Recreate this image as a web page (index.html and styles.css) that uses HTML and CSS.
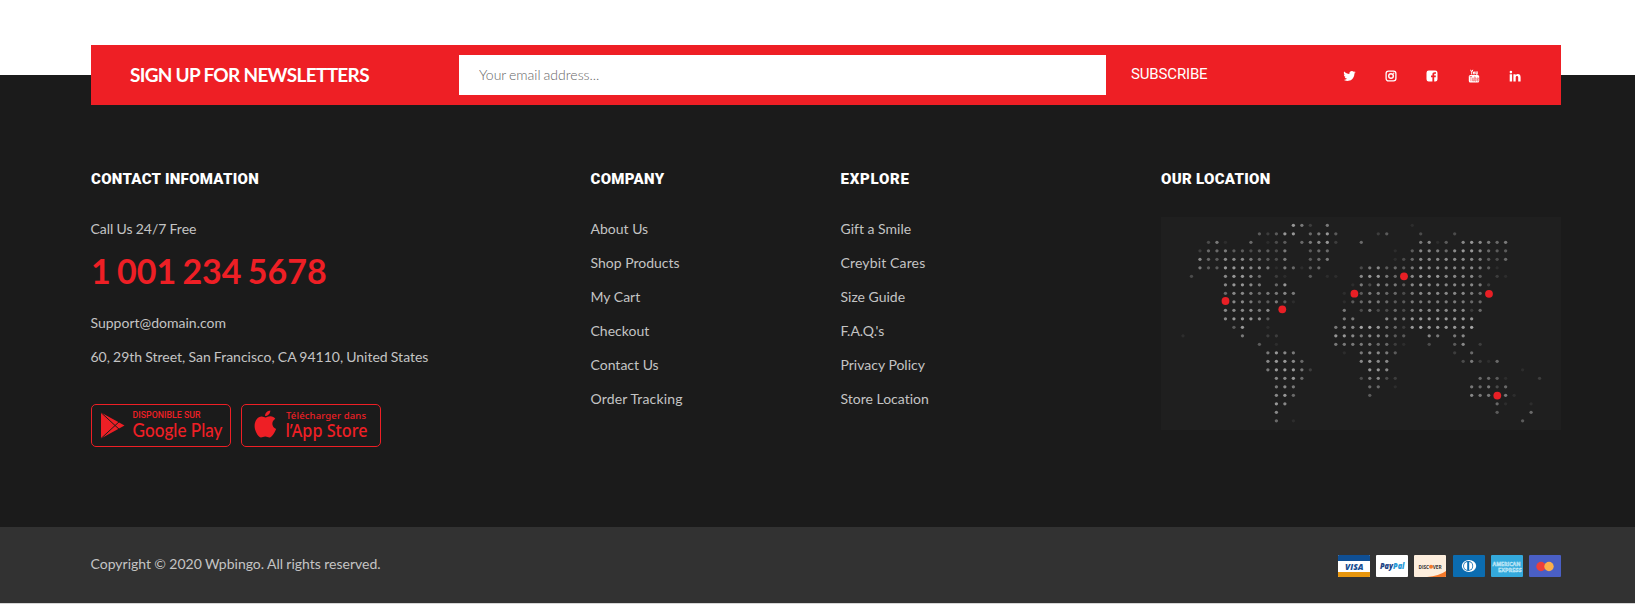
FILE: index.html
```html
<!DOCTYPE html>
<html lang="en">
<head>
<meta charset="utf-8">
<title>Wpbingo</title>
<link rel="stylesheet" href="styles.css">
</head>
<body>
<footer class="footer">
  <section class="newsletter">
    <h2 class="newsletter-title"><span>SIGN UP FOR NEWSLETTERS</span></h2>
    <form class="newsletter-form">
      <input class="newsletter-input" type="email" placeholder="Your email address...">
      <button class="newsletter-button" type="button"><span>SUBSCRIBE</span></button>
    </form>
    <nav class="social">
      <a class="social-link"><svg viewBox="0 0 1664 1792" width="13" height="14"><path fill="currentColor" d="M1620 408q-67 98-162 167 1 14 1 42 0 130-38 259.500t-115.500 248.500-184.500 210.500-258 146-323 54.500q-271 0-496-145 35 4 78 4 225 0 401-138-105-2-188-64.500t-114-159.500q33 5 61 5 43 0 85-11-112-23-185.500-111.500t-73.500-205.500v-4q68 38 146 41-66-44-105-115t-39-154q0-88 44-163 121 149 294.500 238.500t371.500 99.500q-8-38-8-74 0-134 94.500-228.500t228.500-94.500q140 0 236 102 109-21 205-78-37 115-142 178 93-10 186-50z"/></svg></a>
      <a class="social-link"><svg viewBox="0 0 12 14" width="12" height="14"><rect x="1.100" y="2.100" width="9.800" height="9.800" rx="2.400" fill="none" stroke="currentColor" stroke-width="1.300"/><circle cx="6" cy="7" r="2.300" fill="none" stroke="currentColor" stroke-width="1.400"/><circle cx="8.700" cy="4.300" r=".7" fill="currentColor"/></svg></a>
      <a class="social-link"><svg viewBox="0 0 12 14" width="12" height="14"><path fill="currentColor" fill-rule="evenodd" d="M2.700 1.500h6.600a2.200 2.200 0 0 1 2.200 2.200v6.600a2.200 2.200 0 0 1-2.200 2.200H8.200V8.300h1.500l.2-1.700H8.200V5.500c0-.5.200-.8.900-.8h.9V3.200H8.700C7 3.200 6.400 4.100 6.400 5.400v1.200H5v1.700h1.400v4.200H2.700a2.200 2.200 0 0 1-2.200-2.200V3.700a2.200 2.200 0 0 1 2.200-2.200z"/></svg></a>
      <a class="social-link"><svg viewBox="0 0 12 14" width="12" height="14"><path fill="none" stroke="currentColor" stroke-width="1" d="M2.600.8l1.100 2.500v2.200M4.800.8L3.700 3.300M5.500 3v1.800q.8 1 1.200 0V3q-.6-.9-1.200 0M8 2.400v2.700h1.200M9.200 2.400v3"/><rect x=".8" y="6.100" width="10.400" height="7.300" rx="1.500" fill="currentColor"/><path fill="none" stroke="#ee1f25" stroke-width=".5" d="M1.700 7.500h2.400M2.900 7.500v4.700M4.600 8.700v3.200h1.200V8.700M6.800 7.300v4.800h1.100V8.900H6.800M10.400 11.400v.6H9.200V8.900h1.200v1.500H9.200"/></svg></a>
      <a class="social-link"><svg viewBox="0 0 12 14" width="12" height="14"><path fill="currentColor" d="M.7 5.300h2.400v7.100H.7zM4.400 5.300h2.300v1c.5-.8 1.200-1.200 2.200-1.200 1.700 0 2.700 1.100 2.700 3.200v4.100H9.200V8.600c0-1-.4-1.600-1.200-1.600-.9 0-1.300.7-1.300 1.600v3.800H4.400z"/><circle cx="1.900" cy="3.100" r="1.300" fill="currentColor"/></svg></a>
    </nav>
  </section>

  <section class="columns">
    <div class="column">
      <h3 class="column-title">CONTACT INFOMATION</h3>
      <p class="line">Call Us 24/7 Free</p>
      <p class="phone">1 001 234 5678</p>
      <p class="line">Support@domain.com</p>
      <p class="line">60, 29th Street, San Francisco, CA 94110, United States</p>
      <div class="stores">
        <svg class="store" viewBox="0 0 140 43" width="140" height="43">
          <rect x=".5" y=".5" width="139" height="42" rx="4.500" fill="none" stroke="currentColor"/>
          <path fill="currentColor" d="M10 8.500v26L33.500 21.500z"/>
          <path fill="none" stroke="#1b1b1b" stroke-width="1" d="M10 8.500l19.500 18M10 34.500l19.500-18"/>
          <text class="store-small" x="41.500" y="14" textLength="68" lengthAdjust="spacingAndGlyphs">DISPONIBLE SUR</text>
          <text class="store-google" x="41.500" y="32.500" textLength="90" lengthAdjust="spacingAndGlyphs">Google Play</text>
        </svg>
        <svg class="store" viewBox="0 0 140 43" width="140" height="43">
          <rect x=".5" y=".5" width="139" height="42" rx="4.500" fill="none" stroke="currentColor"/>
          <path fill="currentColor" d="M29.300 6.500c.2 3-2.300 5.600-5.200 5.500-.2-2.700 2.400-5.300 5.200-5.500zM24.500 13.400c1.200 0 2.600-1.300 5-1.200 2 .1 3.800 1 4.800 2.600-4.400 2.800-3.600 8.300.8 10.100-1 2.600-3.300 7.500-6.200 8.500-1.700.3-2.600-.9-4.600-.9s-3 1-4.500.9c-3.100-.4-6.300-7.100-6.200-11.600.1-5.400 3.300-9.500 7.100-9.400 1.700 0 2.900 1 3.800 1z"/>
          <text class="store-top" x="45" y="14.500" textLength="80">Télécharger dans</text>
          <text class="store-apple" x="44.500" y="33" textLength="82" lengthAdjust="spacingAndGlyphs">l’App Store</text>
        </svg>
      </div>
    </div>
    <div class="column">
      <h3 class="column-title">COMPANY</h3>
      <ul class="links">
        <li>About Us</li><li>Shop Products</li><li>My Cart</li><li>Checkout</li><li>Contact Us</li><li class="loose">Order Tracking</li>
      </ul>
    </div>
    <div class="column">
      <h3 class="column-title wide">EXPLORE</h3>
      <ul class="links">
        <li>Gift a Smile</li><li class="loose">Creybit Cares</li><li>Size Guide</li><li>F.A.Q.'s</li><li>Privacy Policy</li><li>Store Location</li>
      </ul>
    </div>
    <div class="column">
      <h3 class="column-title">OUR LOCATION</h3>
      <svg class="map" id="map" viewBox="0 0 400 213" width="400" height="213"></svg>
    </div>
  </section>

  <section class="bottom">
    <p class="copyright">Copyright © 2020 Wpbingo. All rights reserved.</p>
    <div class="cards">
      <svg viewBox="0 0 32 22" width="32" height="22"><rect width="32" height="22" rx="1" fill="#fff"/><path fill="#0f4f94" d="M0 1a1 1 0 0 1 1-1h30a1 1 0 0 1 1 1v5H0z"/><path fill="#e8960c" d="M0 17h32v4a1 1 0 0 1-1 1H1a1 1 0 0 1-1-1z"/><text class="card-text" x="7" y="14.500" font-size="8" fill="#164e92" textLength="18.500" lengthAdjust="spacingAndGlyphs">VISA</text></svg>
      <svg viewBox="0 0 32 22" width="32" height="22"><rect width="32" height="22" rx="1" fill="#fff"/><text class="card-text" x="4" y="13.500" font-size="8" fill="#1c3f85" textLength="24.500" lengthAdjust="spacingAndGlyphs">Pay<tspan fill="#2597d5">Pal</tspan></text></svg>
      <svg viewBox="0 0 32 22" width="32" height="22"><rect width="32" height="22" rx="1" fill="#fdeedd"/><path fill="#f4792a" d="M32 16v5a1 1 0 0 1-1 1H13q12-1 19-6z"/><text class="card-plain" x="4.500" y="13.500" font-size="5" fill="#333" textLength="10.500" lengthAdjust="spacingAndGlyphs">DISC</text><circle cx="17" cy="11.700" r="2" fill="#f4792a"/><text class="card-plain" x="18.700" y="13.500" font-size="5" fill="#333" textLength="9" lengthAdjust="spacingAndGlyphs">VER</text></svg>
      <svg viewBox="0 0 32 22" width="32" height="22"><rect width="32" height="22" rx="1" fill="#0b6cb0"/><ellipse cx="16" cy="11" rx="7.200" ry="6" fill="#fff"/><circle cx="15.200" cy="11" r="5" fill="#0b6cb0"/><path fill="#fff" d="M14.200 7v8a4.100 4.100 0 0 1 0-8zM16.200 7v8a4.100 4.100 0 0 0 0-8z"/></svg>
      <svg viewBox="0 0 32 22" width="32" height="22"><rect width="32" height="22" rx="1" fill="#34a9dc"/><g class="card-plain" font-size="6" fill="#7fcaeb" stroke="#d8f1fb" stroke-width=".4"><text x="1.500" y="10.500" textLength="28" lengthAdjust="spacingAndGlyphs">AMERICAN</text><text x="7" y="17" textLength="23.500" lengthAdjust="spacingAndGlyphs">EXPRESS</text></g></svg>
      <svg viewBox="0 0 32 22" width="32" height="22"><rect width="32" height="22" rx="1" fill="#4a5fc5"/><circle cx="12" cy="11.500" r="4.700" fill="#ed3f3a"/><circle cx="20" cy="11.500" r="4.700" fill="#fbb04a"/></svg>
    </div>
  </section>
</footer>
<script src="map.js"></script>
</body>
</html>
```
FILE: styles.css
```css
* { box-sizing: border-box; }
body {
  height: 604px;
  margin: 0;
  overflow: hidden;
  background: #d6d6d6;
  font-family: Lato, sans-serif;
  font-variant-ligatures: none;
}
h2, h3, p, ul { margin: 0; padding: 0; }
ul { list-style: none; }
svg { display: block; flex: none; }

.footer {
  display: flex;
  flex-direction: column;
  height: 603px;
  padding-top: 45px;
  background: linear-gradient(#fff 75px, #1b1b1b 75px);
}

.newsletter {
  display: flex;
  align-items: center;
  width: 1470px;
  height: 60px;
  margin-left: 91px;
  background: #ee1f25;
  color: #fff;
}
.newsletter-title {
  width: 368px;
  padding-left: 39px;
  font-size: 19px;
  line-height: 60px;
  letter-spacing: -0.68px;
  word-spacing: -0.1px;
  white-space: nowrap;
}
.newsletter-form { display: flex; width: 872px; }
.newsletter-input {
  width: 647px;
  height: 40px;
  padding: 0 20px 2px;
  border: 0;
  border-radius: 0;
  background: #fff;
  font: 300 14px Lato, sans-serif;
  word-spacing: -0.8px;
}
.newsletter-input::placeholder { color: #666; opacity: 1; }
.newsletter-button {
  padding: 0 0 3px 25px;
  border: 0;
  background: none;
  color: #fff;
  font: 400 15px Roboto, sans-serif;
  letter-spacing: -0.15px;
}
.social { display: flex; gap: 29.400px; padding-left: 12.700px; padding-top: 1px; }
.social-link { display: flex; width: 12px; justify-content: center; }

.columns {
  display: grid;
  grid-template-columns: 499.500px 250px 320.500px 400px;
  width: 1470px;
  height: 422px;
  margin-left: 91px;
  padding-top: 63px;
}
.column-title {
  height: 49px;
  color: #fff;
  font: 900 15px/22px Roboto, sans-serif;
  letter-spacing: 0.3px;
  white-space: nowrap;
}
.column-title.wide { letter-spacing: 0.75px; }
.line, .links li {
  height: 34px;
  color: #c4c4c4;
  font-size: 14px;
  line-height: 24px;
  white-space: nowrap;
}
.line { margin-left: -0.5px; word-spacing: -0.45px; }
.links .loose { letter-spacing: 0.15px; }
.phone {
  height: 60px;
  color: #ee1f25;
  font-size: 34px;
  font-weight: 700;
  line-height: 40px;
  word-spacing: -2px;
}
.stores { display: flex; gap: 10px; margin-top: 25px; color: #ee1f25; }
.store { fill: currentColor; }
.store-small { font: 500 9px Roboto, sans-serif; }
.store-google { font: 500 19px Lato, sans-serif; }
.store-top { font: 500 9.500px "Noto Sans", sans-serif; }
.store-apple { font: 500 17.500px "Noto Sans", sans-serif; }
.map { background: #1f1f1f; }

.bottom {
  display: flex;
  justify-content: space-between;
  align-items: center;
  height: 76px;
  padding: 0 74px 0 91px;
  background: #323232;
}
.copyright {
  margin-left: -0.5px;
  padding-bottom: 2px;
  color: #c4c4c4;
  font-size: 14px;
  line-height: 24px;
  word-spacing: -0.25px;
}
.cards { display: flex; gap: 6.200px; padding-top: 2px; }
.card-text { font-family: "Open Sans", sans-serif; font-weight: 800; font-style: italic; }
.card-plain { font-family: "Open Sans", sans-serif; font-weight: 700; }
```
FILE: map.js
```javascript
// Each row lists column:brightness pairs on the dot grid of the world map.
const rows = [
  "13:8 14:6 15:2 17:6 27:1",
  "9:4 10:2 11:4 12:8 13:8 15:5 16:6 17:8 18:4 23:2 24:4 28:3 32:3",
  "3:3 4:6 5:1 8:5 10:1 11:3 12:4 14:5 15:6 16:7 17:8 18:2 21:5 28:6 29:7 30:1 31:4 33:7 34:8 35:7 36:6 37:5 38:6",
  "2:2 3:5 4:5 5:6 6:4 7:4 8:3 9:4 10:4 11:3 12:6 15:4 16:5 17:5 25:1 27:4 28:7 29:7 30:6 31:5 32:7 33:8 34:8 35:7 36:5 37:4 38:4",
  "2:7 3:5 4:4 5:7 6:7 7:7 8:6 9:5 10:4 11:3 12:6 15:4 16:5 17:6 25:1 26:3 27:5 28:7 29:7 30:7 31:7 32:7 33:7 34:7 35:6 36:4 37:3 38:5",
  "2:6 3:4 4:4 5:8 6:8 7:8 8:7 9:7 10:6 11:1 12:6 13:5 14:1 15:4 16:5 21:3 22:6 23:7 24:4 25:5 26:4 27:6 28:8 29:7 30:7 31:7 32:7 33:7 34:7 35:6 36:4 37:1",
  "1:3 5:7 6:8 7:8 8:7 9:5 11:2 12:1 15:4 17:1 18:1 21:7 22:8 23:8 24:6 25:5 27:7 28:8 29:8 30:8 31:7 32:7 33:7 34:7 35:4 37:2 38:1",
  "5:7 6:8 7:8 8:7 9:6 11:5 12:8 20:1 21:6 22:3 23:7 24:6 25:6 26:4 27:7 28:8 29:7 30:7 31:7 32:7 33:7 34:7 35:6 36:2",
  "5:5 6:7 7:7 8:6 9:5 10:6 11:6 12:7 13:6 19:1 21:4 22:6 23:6 24:5 25:5 26:3 27:6 28:7 29:7 30:7 31:7 32:7 33:7 34:6 35:5",
  "6:7 7:7 8:6 9:4 10:4 11:6 12:4 13:1 19:1 20:4 21:5 22:6 23:6 24:5 25:4 26:4 27:6 28:6 29:6 30:6 31:6 32:6 33:6 34:5 35:5",
  "5:7 6:7 7:7 8:7 9:6 10:7 19:6 21:3 22:6 23:3 24:3 25:5 26:3 27:6 28:7 29:7 30:7 31:7 32:7 33:7 34:2 35:5",
  "5:7 6:8 7:8 8:8 9:7 10:4 19:6 20:6 24:7 25:6 26:6 27:8 28:8 29:8 30:8 31:8 32:8 33:8 34:8",
  "6:4 7:8 10:1 18:6 19:7 20:7 21:9 22:9 23:8 24:6 25:5 26:2 27:8 28:9 29:8 30:8 31:8 32:8 33:8 34:9",
  "0:1 7:6 10:2 11:2 18:8 19:8 20:7 21:6 22:7 23:7 24:6 25:4 26:4 29:7 30:6 32:6 33:7",
  "9:4 11:1 18:6 19:6 20:6 21:6 22:6 23:5 24:5 25:2 26:1 29:3 32:4 33:7 35:2",
  "10:6 11:8 12:7 13:6 19:1 21:6 22:7 23:7 24:6 25:4 32:2 34:5",
  "10:7 11:8 12:8 13:7 14:5 21:7 22:8 23:7 24:7 33:3 34:6 35:2 36:1 37:5",
  "10:6 11:8 12:8 13:8 14:6 15:2 22:8 23:8 24:7 40:1",
  "11:7 12:7 13:8 14:5 21:3 22:6 23:7 24:3 25:2 35:5 36:5 37:4 38:1 42:2",
  "11:6 12:7 13:6 22:5 23:5 25:1 34:6 35:5 36:6 37:3 38:5",
  "11:7 12:8 13:5 22:4 34:7 35:6 36:6 38:6 39:1",
  "11:8 12:7 37:5 38:1 41:1",
  "11:7 37:4 41:5",
  "11:5 13:1 40:4"
];
const markers = [[64.5, 84], [121.3, 92.3], [193.4, 76.7], [243, 59.3], [328, 76.8], [336.3, 178.6]];
const map = document.getElementById("map");

function dot(x, y, r, fill, opacity) {
  const c = document.createElementNS("http://www.w3.org/2000/svg", "circle");
  c.setAttribute("cx", x);
  c.setAttribute("cy", y);
  c.setAttribute("r", r);
  c.setAttribute("fill", fill);
  c.setAttribute("opacity", opacity);
  map.appendChild(c);
}

rows.forEach((row, r) => row.split(" ").forEach(cell => {
  const [col, level] = cell.split(":").map(Number);
  dot(22 + col * 8.49, 8.3 + r * 8.5, 1.65, "#a6a6a6", level / 9);
}));
markers.forEach(([x, y]) => dot(x, y, 3.9, "#e81f25", 1));
```
